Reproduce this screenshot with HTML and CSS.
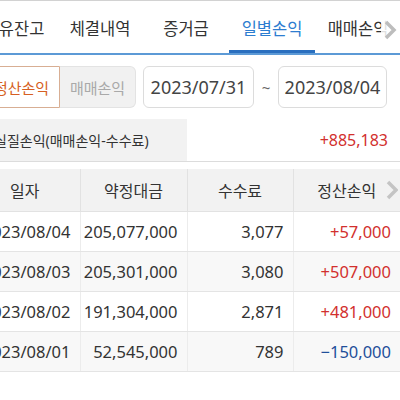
FILE: index.html
```html
<!DOCTYPE html>
<html lang="ko">
<head>
<meta charset="utf-8">
<link rel="stylesheet" href="styles.css">
</head>
<body>
<div class="tabbar">
  <nav class="tabs">
    <div class="tab">보유잔고</div>
    <div class="tab">체결내역</div>
    <div class="tab">증거금</div>
    <div class="tab active">일별손익</div>
    <div class="tab">매매손익</div>
  </nav>
  <div class="tab-more">
    <svg width="14" height="20" viewBox="0 0 14 20"><polyline points="3,2 11,10 3,18" fill="none" stroke="#bdbdbd" stroke-width="3.5"/></svg>
  </div>
</div>

<div class="filters">
  <div class="seg">
    <div class="seg-btn on">정산손익</div>
    <div class="seg-btn off">매매손익</div>
  </div>
  <div class="date">2023/07/31</div>
  <div class="tilde">~</div>
  <div class="date date2">2023/08/04</div>
</div>

<div class="summary">
  <div class="sum-label">실질손익(매매손익-수수료)</div>
  <div class="sum-value up">+885,183</div>
</div>

<div class="grid-wrap">
  <table class="grid">
    <colgroup>
      <col class="c1"><col class="c2"><col class="c3"><col class="c4">
    </colgroup>
    <thead>
      <tr><th>일자</th><th>약정대금</th><th>수수료</th><th>정산손익</th></tr>
    </thead>
    <tbody>
      <tr><td>2023/08/04</td><td>205,077,000</td><td>3,077</td><td class="up">+57,000</td></tr>
      <tr><td>2023/08/03</td><td>205,301,000</td><td>3,080</td><td class="up">+507,000</td></tr>
      <tr><td>2023/08/02</td><td>191,304,000</td><td>2,871</td><td class="up">+481,000</td></tr>
      <tr><td>2023/08/01</td><td>52,545,000</td><td>789</td><td class="down">−150,000</td></tr>
    </tbody>
  </table>
  <div class="grid-more">
    <svg width="12" height="20" viewBox="0 0 12 20"><polyline points="2,2 10,10 2,18" fill="none" stroke="#c4c4c4" stroke-width="3.5"/></svg>
  </div>
</div>
</body>
</html>
```

FILE: styles.css
```css
* { box-sizing: border-box; }
html, body { margin: 0; padding: 0; }
body {
  width: 400px;
  height: 400px;
  overflow: hidden;
  background: #fff;
  font-family: "Noto Sans", "Noto Sans CJK KR", sans-serif;
  color: #333;
}

.tabbar {
  position: relative;
  overflow: hidden;
  border-top: 1px solid #d2d2d2;
  border-bottom: 2px solid #5c9ad6;
  height: 55px;
}
.tabs {
  display: flex;
  margin-left: -29px;
  height: 100%;
}
.tab {
  flex: none;
  width: 86px;
  display: flex;
  align-items: center;
  justify-content: center;
  font-size: 16.5px;
  color: #333;
  position: relative;
  padding-top: 2px;
}
.tab.active { color: #2d7dd0; }
.tab.active::after {
  content: "";
  position: absolute;
  left: 0;
  right: 0;
  bottom: 0;
  height: 3px;
  background: #2a6fbf;
}
.tab-more {
  position: absolute;
  right: 1px;
  top: 18px;
  width: 18px;
  height: 22px;
  display: flex;
  align-items: center;
  justify-content: center;
  background: rgba(255,255,255,0.85);
}

.filters {
  display: flex;
  align-items: center;
  margin-top: 11px;
  margin-left: -17px;
  height: 42px;
}
.seg { display: flex; height: 42px; }
.seg-btn {
  display: flex;
  align-items: center;
  justify-content: center;
  font-size: 15px;
}
.seg-btn.on {
  width: 77px;
  border: 1px solid #d8ae93;
  border-radius: 4px 0 0 4px;
  color: #d65f22;
  background: #fff;
}
.seg-btn.off {
  width: 76px;
  border: 1px solid #e3e3e3;
  border-left: none;
  border-radius: 0 6px 6px 0;
  background: #f1f1f1;
  color: #a9a9a9;
}
.date {
  margin-left: 7px;
  width: 111px;
  height: 42px;
  border: 1px solid #dcdcdc;
  border-radius: 6px;
  display: flex;
  align-items: center;
  justify-content: center;
  font-size: 18px;
  color: #444;
}
.date2 { margin-left: 0; width: 109px; }
.tilde {
  width: 24px;
  text-align: center;
  font-size: 15px;
  color: #666;
}

.summary {
  display: flex;
  margin-top: 11px;
  margin-left: -16px;
  height: 43px;
  border-bottom: 1px solid #dcdcdc;
}
.sum-label {
  width: 203px;
  background: #f2f2f2;
  display: flex;
  align-items: center;
  padding-left: 10px;
  font-size: 14px;
  color: #333;
  white-space: nowrap;
}
.sum-value {
  flex: 1;
  display: flex;
  align-items: center;
  justify-content: flex-end;
  padding-right: 12px;
  font-size: 16px;
}
.up { color: #d2302e; }
.down { color: #1f4f9a; }

.grid-wrap {
  position: relative;
  overflow: hidden;
  margin-top: 7px;
}
.grid {
  margin-left: -24px;
  width: 424px;
  border-collapse: collapse;
  table-layout: fixed;
  font-size: 16.5px;
}
.c1 { width: 104px; }
.c2 { width: 107px; }
.c3 { width: 106px; }
.c4 { width: 107px; }
.grid th {
  height: 42px;
  background: #f2f2f2;
  font-weight: normal;
  font-size: 16px;
  color: #333;
  border-left: 1px solid #e2e2e2;
  border-bottom: 1px solid #e2e2e2;
  text-align: center;
  padding: 0;
}
.grid th:first-child { border-left: none; padding-right: 6px; }
.grid td {
  height: 40px;
  border-left: 1px solid #ececec;
  border-bottom: 1px solid #e4e4e4;
  text-align: right;
  padding: 0 9px 0 0;
  white-space: nowrap;
}
.grid td:first-child { border-left: none; }
.grid tbody tr:nth-child(even) td { background: #f8f8f8; }
.grid-more {
  position: absolute;
  right: 2px;
  top: 11px;
  width: 12px;
  height: 20px;
}
```
